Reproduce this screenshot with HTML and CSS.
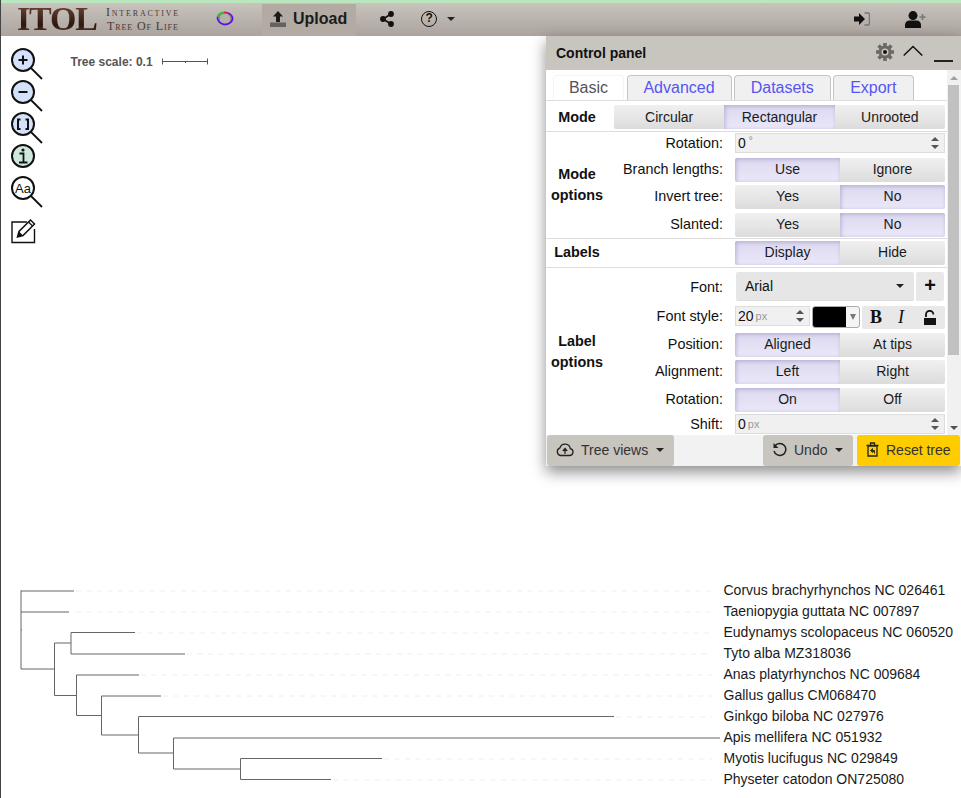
FILE: index.html
```html
<!DOCTYPE html>
<html lang="en">
<head>
<meta charset="utf-8">
<title>iTOL</title>
<link rel="stylesheet" href="styles.css">
</head>
<body>
<header class="topbar">
  <div class="logo">
    <span class="logo-mark">ITOL</span>
    <span class="logo-sub"><span class="sub-a">Interactive</span><span class="sub-b">Tree Of Life</span></span>
  </div>
  <svg class="tree-ico" viewBox="0 0 20 16" width="20" height="16"><circle cx="10" cy="8" r="6" fill="#b5b0aa" stroke="#7a7a72" stroke-width="1"/><path d="M2.600 5.600A7.600 6.600 0 0 0 17.600 8" fill="none" stroke="#5a14e6" stroke-width="1.800"/><path d="M17.600 8A7.600 6.600 0 0 0 13 2" fill="none" stroke="#5a14e6" stroke-width="1.800"/><path d="M13 2A7.600 6.600 0 0 0 9 1.400" fill="none" stroke="#e0203a" stroke-width="1.800"/><path d="M9 1.400A7.600 6.600 0 0 0 2.600 5.600" fill="none" stroke="#22c02a" stroke-width="1.800"/></svg>
  <a class="upload">
    <svg viewBox="0 0 16 16" width="16" height="16"><path d="M8 0 13 5.500H10V11H6V5.500H3Z" fill="#1a1a1a"/><rect x="0" y="11.500" width="16" height="4.500" fill="#66615c"/></svg>
    <span>Upload</span>
  </a>
  <svg class="share" viewBox="0 0 14 16" width="14" height="16"><path d="M11 3 3 8l8 5" fill="none" stroke="#111" stroke-width="1.600"/><circle cx="11" cy="3" r="2.900" fill="#111"/><circle cx="3" cy="8" r="2.900" fill="#111"/><circle cx="11" cy="13" r="2.900" fill="#111"/></svg>
  <span class="help"><span class="help-q">?</span><span class="caret"></span></span>
  <svg class="signin" viewBox="0 0 16 14" width="16" height="14"><path d="M0 4.600H5V1L11 7 5 13V9.400H0Z" fill="#111"/><path d="M10.500 1H14a1.400 1.400 0 0 1 1.400 1.400v9.200A1.400 1.400 0 0 1 14 13H10.500" fill="none" stroke="#777" stroke-width="1.400"/></svg>
  <svg class="adduser" viewBox="0 0 21 17" width="21" height="17"><circle cx="8" cy="4.600" r="4.500" fill="#111"/><path d="M0 17V14c0-3 2-4.500 4.500-4.500h7C14 9.500 16 11 16 14v3Z" fill="#111"/><path d="M17.500 3v6M14.500 6h6" stroke="#777" stroke-width="1.600"/></svg>
</header>

<main class="canvas">
  <nav class="tools">
    <svg class="tool" viewBox="0 0 32 32" width="32" height="32"><circle cx="12" cy="12" r="11" fill="#d3e2fa" stroke="#111" stroke-width="2"/><path d="M20 20 31 31" stroke="#111" stroke-width="1.800"/><path d="M7.500 12h9M12 7.500v9" stroke="#111" stroke-width="2"/></svg>
    <svg class="tool" viewBox="0 0 32 32" width="32" height="32"><circle cx="12" cy="12" r="11" fill="#d3e2fa" stroke="#111" stroke-width="2"/><path d="M20 20 31 31" stroke="#111" stroke-width="1.800"/><path d="M7.500 12h9" stroke="#111" stroke-width="2"/></svg>
    <svg class="tool" viewBox="0 0 32 32" width="32" height="32"><circle cx="12" cy="12" r="11" fill="#d3e2fa" stroke="#111" stroke-width="2"/><path d="M20 20 31 31" stroke="#111" stroke-width="1.800"/><path d="M9.500 7.500H7v9.500h2.500M14.500 7.500H17v9.500h-2.500" fill="none" stroke="#111" stroke-width="2"/></svg>
    <svg class="tool" viewBox="0 0 32 32" width="32" height="32"><circle cx="12" cy="12" r="11" fill="#cfe8de" stroke="#111" stroke-width="2"/><circle cx="12" cy="6" r="1.600" fill="#111"/><path d="M8.500 9.500H12.500V18M8 18.500h8.500" fill="none" stroke="#111" stroke-width="1.800"/></svg>
    <svg class="tool" viewBox="0 0 32 32" width="32" height="32"><circle cx="12" cy="12" r="11" fill="#fff" stroke="#111" stroke-width="2"/><path d="M20 20 31 31" stroke="#111" stroke-width="1.800"/><text x="12" y="16.500" text-anchor="middle" class="aa">Aa</text></svg>
    <svg class="tool tool-edit" viewBox="0 0 26 26" width="26" height="26"><path d="M16 4H1v20.500h22.500V11" fill="none" stroke="#111" stroke-width="1.400"/><path d="M6.500 19 8 13.500 19.500 2l4 4L12 17.500Z" fill="#fff" stroke="#111" stroke-width="1.500"/><path d="M6.500 19 8 13.500l4 4Z" fill="#111"/><path d="M17.500 4l4 4" stroke="#111" stroke-width="1.300"/></svg>
  </nav>

  <svg class="tree" viewBox="0 0 960 798" width="960" height="798">
    <g class="scale">
      <text x="70.500" y="66">Tree scale: 0.1</text>
      <path d="M162.500 58.500v6M207.500 58.500v6M162.500 61.500h45M185.500 61.500v1.500"/>
    </g>
    <g class="dash">
      <path d="M76 591H712M76 612H712M137 633H712M187 654H712M141 675H712M163 696H712M384 759H712M333 780H712M616 717H712"/>
    </g>
    <g class="branch">
      <path d="M21 590.500V669M21 591H74M21 612H69M21 669H54.500M21 630H22"/>
      <path d="M54.500 643V695.500M54.500 643H71M71 632.500V654M71 632.500H135M71 654H185"/>
      <path d="M54.500 695.500H76.500M76.500 675V715.500M76.500 675H139M76.500 715.500H101.500"/>
      <path d="M101.500 696V735M101.500 696H161M101.500 735H138.500M138.500 716.500V753M138.500 716.500H614M138.500 753H173.500"/>
      <path d="M173.500 738V769M173.500 738H720M173.500 769H240.500M240.500 758.500V779.500M240.500 758.500H382M240.500 779.500H331"/>
    </g>
    <g class="labels">
      <text x="723.500" y="595">Corvus brachyrhynchos NC 026461</text>
      <text x="723.500" y="616">Taeniopygia guttata NC 007897</text>
      <text x="723.500" y="637">Eudynamys scolopaceus NC 060520</text>
      <text x="723.500" y="658">Tyto alba MZ318036</text>
      <text x="723.500" y="679">Anas platyrhynchos NC 009684</text>
      <text x="723.500" y="700">Gallus gallus CM068470</text>
      <text x="723.500" y="721">Ginkgo biloba NC 027976</text>
      <text x="723.500" y="742">Apis mellifera NC 051932</text>
      <text x="723.500" y="763">Myotis lucifugus NC 029849</text>
      <text x="723.500" y="784">Physeter catodon ON725080</text>
    </g>
  </svg>

  <section class="panel">
    <div class="panel-title">
      <span class="panel-name">Control panel</span>
      <svg class="gear" viewBox="0 0 20 20" width="20" height="20"><path d="M10 3.500a6.500 6.500 0 1 0 0 13 6.500 6.500 0 0 0 0-13Z" fill="#6b6866"/><path d="M10 1v18M1 10h18M3.600 3.600l12.800 12.800M16.400 3.600 3.600 16.400" stroke="#6b6866" stroke-width="3.600"/><circle cx="10" cy="10" r="3.500" fill="#c8c4be"/><circle cx="10" cy="10" r="2" fill="#111"/></svg>
      <svg class="chev" viewBox="0 0 20 12" width="20" height="12"><path d="M.7 10.500 10 1.500l9.300 9" fill="none" stroke="#111" stroke-width="1.500"/></svg>
      <span class="minimize"></span>
    </div>
    <div class="panel-body">
      <div class="content">
        <div class="tabs">
          <span class="tab tab-on">Basic</span>
          <span class="tab">Advanced</span>
          <span class="tab">Datasets</span>
          <span class="tab">Export</span>
        </div>

        <div class="mode-row">
          <b class="mode-title">Mode</b>
          <div class="seg seg-mode">
            <span class="btn">Circular</span><span class="btn on">Rectangular</span><span class="btn">Unrooted</span>
          </div>
        </div>

        <div class="group group-mode">
          <b class="group-title">Mode<br>options</b>
          <div class="rows">
            <div class="row row-rot"><label>Rotation:</label><div class="num"><span>0</span><sup class="unit-deg">°</sup><span class="spin"></span></div></div>
            <div class="row row-a"><label>Branch lengths:</label><div class="seg"><span class="btn on">Use</span><span class="btn">Ignore</span></div></div>
            <div class="row row-b"><label>Invert tree:</label><div class="seg"><span class="btn">Yes</span><span class="btn on">No</span></div></div>
            <div class="row row-b"><label>Slanted:</label><div class="seg"><span class="btn">Yes</span><span class="btn on">No</span></div></div>
          </div>
        </div>

        <div class="labels-row">
          <b class="group-title">Labels</b>
          <div class="seg"><span class="btn on">Display</span><span class="btn">Hide</span></div>
        </div>

        <div class="group group-label">
          <b class="group-title">Label<br>options</b>
          <div class="rows">
            <div class="row row-font"><label>Font:</label>
              <div class="font-ctl"><span class="select">Arial<span class="caret"></span></span><span class="plus">+</span></div>
            </div>
            <div class="row row-style"><label>Font style:</label>
              <div class="style-ctl">
                <div class="num num-small"><span>20</span><small>px</small><span class="spin"></span></div>
                <div class="swatch"><span class="swatch-color"></span><span class="swatch-arrow"></span></div>
                <div class="style-btns">
                  <span class="b-ico">B</span><span class="i-ico">I</span>
                  <svg viewBox="0 0 14 16" width="14" height="16"><path d="M3 7V4.500a3.700 3.700 0 0 1 7.400 0" fill="none" stroke="#111" stroke-width="1.800"/><rect x="1" y="8" width="12" height="7" fill="#111"/></svg>
                </div>
              </div>
            </div>
            <div class="row row-c row-c1"><label>Position:</label><div class="seg"><span class="btn on">Aligned</span><span class="btn">At tips</span></div></div>
            <div class="row row-c row-c2"><label>Alignment:</label><div class="seg"><span class="btn on">Left</span><span class="btn">Right</span></div></div>
            <div class="row row-c row-c3"><label>Rotation:</label><div class="seg"><span class="btn on">On</span><span class="btn">Off</span></div></div>
            <div class="row row-shift"><label>Shift:</label><div class="num"><span>0</span><small>px</small><span class="spin"></span></div></div>
          </div>
        </div>
      </div>
      <div class="scrollbar"><span class="sb-up"></span><span class="sb-track"><span class="sb-thumb"></span></span><span class="sb-down"></span></div>
    </div>
    <div class="panel-foot">
      <span class="foot-btn">
        <svg viewBox="0 0 18 14" width="18" height="14"><path d="M4.500 12.500h9a3.500 3.500 0 0 0 .8-6.900A5.300 5.300 0 0 0 4 4.800a4 4 0 0 0 .5 7.700Z" fill="none" stroke="#222" stroke-width="1.300"/><path d="M9 11V6M6.800 8 9 5.500 11.200 8" fill="#222" stroke="#222" stroke-width="1.200"/></svg>
        Tree views<span class="caret"></span>
      </span>
      <span class="foot-btn foot-undo">
        <svg viewBox="0 0 15 15" width="15" height="15"><path d="M3 3.800A6 6 0 1 1 2 9" fill="none" stroke="#222" stroke-width="1.500"/><path d="M1.500 1v5h5Z" fill="#222"/></svg>
        Undo<span class="caret"></span>
      </span>
      <span class="foot-btn foot-reset">
        <svg viewBox="0 0 13 15" width="13" height="15"><path d="M2 4h9v10H2ZM.5 3.500h12M4.500 3V1h4v2" fill="none" stroke="#222" stroke-width="1.300"/><path d="M4.500 8.500 6.500 6.500v4ZM6.500 8.500h2v3" fill="#222" stroke="#222" stroke-width=".8"/></svg>
        Reset tree
      </span>
    </div>
  </section>
</main>
</body>
</html>
```
FILE: styles.css
```css
* { box-sizing: border-box; }
html, body { margin: 0; padding: 0; height: 100%; overflow: hidden; }
body {
  font-family: "Liberation Sans", Arial, sans-serif;
  font-size: 14px;
  color: #111;
  background: #fff;
  border-left: 1px solid #444;
}

/* top bar */
.topbar {
  height: 36px;
  border-top: 3px solid #b9e6bd;
  padding-bottom: 1px;
  background: linear-gradient(#c8c3bd, #aca39d);
  display: flex;
  align-items: center;
}
.logo { display: flex; align-items: center; margin-left: 16px; width: 187px; }
.logo-mark {
  font-family: "Liberation Serif", serif;
  font-weight: 700;
  font-size: 34px;
  line-height: 28px;
  letter-spacing: -1.200px;
  width: 89px;
  background: linear-gradient(#6a4436, #2e170f 70%, #54342a);
  -webkit-background-clip: text;
  background-clip: text;
  color: transparent;
}
.logo-sub {
  display: flex;
  flex-direction: column;
  font-family: "Liberation Serif", serif;
  font-variant: small-caps;
  font-size: 12px;
  line-height: 14px;
  color: #4a3a32;
}
.sub-a { letter-spacing: 1.800px; }
.sub-b { letter-spacing: 0.900px; margin-left: 1px; }
.tree-ico { margin-left: 11px; }
.upload {
  display: flex;
  align-items: center;
  gap: 7px;
  height: 32px;
  align-self: flex-end;
  margin: 0 0 -1px 27px;
  padding: 0 9px 2px 8px;
  background: #b3aaa3;
  font-size: 16px;
  font-weight: 700;
  color: #1c1c1c;
}
.share { margin-left: 24px; }
.help { display: flex; align-items: center; margin-left: 27px; }
.help-q {
  width: 16px;
  height: 16px;
  border: 1.500px solid #111;
  border-radius: 50%;
  font-size: 12px;
  font-weight: 700;
  line-height: 13px;
  text-align: center;
}
.help .caret { margin-left: 10px; }
.signin { margin: -1px 35px 0 auto; }
.adduser { margin-right: 35px; }

.caret {
  display: inline-block;
  width: 0;
  height: 0;
  border-left: 4.500px solid transparent;
  border-right: 4.500px solid transparent;
  border-top: 4.500px solid #222;
}

/* canvas */
.canvas { position: relative; height: 762px; }
.tree { position: absolute; left: -1px; top: -36px; }
.tree text { font-family: "Liberation Sans", Arial, sans-serif; }
.scale text { font-size: 12px; font-weight: 700; fill: #555; }
.scale path { fill: none; stroke: #555; stroke-width: 1; }
.dash path { fill: none; stroke: #eee; stroke-width: 1; stroke-dasharray: 5 5.500; }
.branch path { fill: none; stroke: #666; stroke-width: 1; }
.labels text { font-size: 14px; fill: #1a1a1a; }

.tools { position: absolute; left: 10px; top: 12px; display: flex; flex-direction: column; z-index: 2; }
.tool { display: block; }
.aa { font-size: 13px; font-family: "Liberation Sans", Arial, sans-serif; fill: #111; }
.tool-edit { margin-top: 10px; }

/* panel */
.panel {
  position: absolute;
  left: 545px;
  top: 0;
  width: 415px;
  height: 430px;
  background: #fff;
  box-shadow: 0 6px 14px rgba(0,0,0,.45);
  display: flex;
  flex-direction: column;
  z-index: 3;
}
.panel-title {
  height: 34px;
  flex: none;
  background: #c8c4be;
  display: flex;
  align-items: center;
  padding-left: 10px;
}
.panel-name { font-size: 14px; font-weight: 700; }
.gear { margin-left: auto; margin-top: -3px; }
.chev { margin-left: 8px; margin-top: -4px; }
.minimize { width: 19px; height: 2px; background: #222; margin: 16px 8px 0 11px; }

.panel-body { flex: none; height: 365px; display: flex; overflow: hidden; background: #f1f1f1; }
.content { width: 401px; flex: none; overflow: hidden; background: #fff; }
.scrollbar { width: 13px; flex: none; display: flex; flex-direction: column; align-items: center; }
.sb-up { height: 0; width: 0; margin: 6px 0 5px; border-left: 4px solid transparent; border-right: 4px solid transparent; border-bottom: 4px solid #a0a0a0; flex: none; }
.sb-down { height: 0; width: 0; margin: 6px 0 5px; border-left: 4px solid transparent; border-right: 4px solid transparent; border-top: 4px solid #505050; flex: none; }
.sb-track { flex: 1; width: 100%; }
.sb-thumb { display: block; width: 11px; margin-left: 1px; height: 270px; background: #c1c1c1; }

.tabs { height: 31px; display: flex; padding: 5px 0 0 7px; gap: 2.500px; border-bottom: 1px solid #ddd; align-items: flex-end; }
.tab {
  height: 25px;
  border: 1px solid #c5c5c5;
  border-bottom: 0;
  border-radius: 4px 4px 0 0;
  background: #f0f0f0;
  color: #5555f5;
  font-size: 16px;
  line-height: 23px;
  text-align: center;
  width: 105px;
}
.tab:nth-child(3) { width: 96.500px; }
.tab:nth-child(4) { width: 80.500px; }
.tab-on { width: 71px; background: #fff; color: #555; border-color: #f4f4f4; }

.mode-row { display: flex; align-items: flex-start; height: 31px; border-bottom: 1px solid #ddd; padding-top: 4px; }
.mode-title { width: 62px; text-align: center; flex: none; font-size: 14.400px; line-height: 24px; margin-right: 6px; }
.seg { display: flex; width: 210px; height: 24px; border-radius: 2px; overflow: hidden; }
.seg-mode { width: 331px; }
.seg-mode .btn { line-height: 24px; }
.btn {
  flex: 1;
  text-align: center;
  line-height: 23px;
  background: linear-gradient(#f0f0f0, #dcdcdc);
  color: #1a1a1a;
}
.btn.on {
  background: linear-gradient(#dcd8ef, #ebe8fa);
  box-shadow: inset 1px 1px 4px rgba(90,80,150,.35);
}

.group { display: flex; border-bottom: 1px solid #ddd; }
.group-label { border-bottom: 0; height: 168px; }
.group-mode { height: 107px; }
.group-title { width: 62px; text-align: center; flex: none; font-size: 14.400px; line-height: 21px; align-self: center; }
.rows { flex: 1; padding-top: 1px; }
.group-label .rows { padding-top: 4px; }
.row { display: flex; align-items: center; gap: 12px; }
.row label { width: 115px; flex: none; text-align: right; font-size: 14.400px; }
.row-a label, .row-b label, .row-c label { padding-bottom: 2px; }
.row-rot { height: 20px; margin-bottom: 5px; }
.row-a { height: 24px; margin-bottom: 3px; }
.row-b { height: 24px; margin-bottom: 4px; }

.labels-row { display: flex; align-items: center; height: 29px; border-bottom: 1px solid #ddd; }
.labels-row .group-title { width: 189px; padding: 0 127px 2px 0; }

.num {
  width: 210px;
  height: 20px;
  border: 1px solid #ddd;
  background: #f0f0f0;
  display: flex;
  align-items: center;
  padding-left: 2px;
  position: relative;
  font-size: 14px;
}
.num small { font-size: 11px; color: #999; margin-left: 2px; }
.unit-deg { font-size: 10px; color: #888; margin: -6px 0 0 3px; }
.spin { position: absolute; right: 5px; top: 3px; width: 8px; height: 12px; }
.spin::before, .spin::after {
  content: "";
  position: absolute;
  left: 0;
  width: 0;
  height: 0;
  border-left: 4px solid transparent;
  border-right: 4px solid transparent;
}
.spin::before { top: 0; border-bottom: 4.500px solid #555; }
.spin::after { bottom: 0; border-top: 4.500px solid #555; }

.row-font { height: 29px; margin-bottom: 5px; }
.font-ctl { display: flex; width: 210px; gap: 2px; margin-left: 1px; }
.select {
  width: 178px;
  height: 29px;
  background: #e6e6e6;
  border-radius: 2px;
  display: flex;
  align-items: center;
  justify-content: space-between;
  padding: 0 10px 0 9px;
  border-bottom: 1px solid #ddd;
}
.plus { width: 28px; height: 29px; background: #e8e8e8; border-radius: 2px; font-size: 20px; line-height: 27px; text-align: center; font-weight: 700; }
.row-style { height: 23px; margin-bottom: 4px; align-items: flex-start; }
.row-style label { line-height: 20px; }
.style-ctl { display: flex; align-items: flex-start; width: 210px; }
.num-small { width: 75px; }
.swatch { width: 48px; height: 22px; margin-left: 2px; border: 1px solid #aaa; border-radius: 3px; display: flex; background: #f4f4f4; overflow: hidden; }
.swatch-color { width: 33px; background: #000; }
.swatch-arrow { width: 0; height: 0; margin: 7px 0 0 4px; border-left: 3px solid transparent; border-right: 3px solid transparent; border-top: 6px solid #777; }
.style-btns { width: 83px; height: 23px; margin-left: 2px; background: #e8e8e8; border-radius: 2px; display: flex; align-items: center; justify-content: space-between; padding: 0 8px 0 8px; font-family: "Liberation Serif", serif; font-size: 18px; }
.b-ico { font-weight: 700; }
.i-ico { font-style: italic; font-weight: 400; margin-left: -3px; }
.row-c { height: 24px; }
.row-c1 { margin-bottom: 3px; }
.row-c2 { margin-bottom: 4px; }
.row-c3 { margin-bottom: 2px; }
.row-shift { height: 20px; }

/* foot */
.panel-foot {
  flex: 1;
  background: #f2f2f2;
  display: flex;
  align-items: center;
  padding: 0 1px;
}
.foot-btn {
  height: 31px;
  background: #c8c4be;
  border-radius: 3px;
  display: flex;
  align-items: center;
  gap: 7px;
  color: #333;
  padding: 0 9px 2px;
  width: 127px;
}
.foot-btn .caret { margin-left: 1px; }
.foot-undo { margin-left: auto; width: 90px; }
.foot-reset { margin-left: 4px; width: 103px; background: #ffcc00; }
```
